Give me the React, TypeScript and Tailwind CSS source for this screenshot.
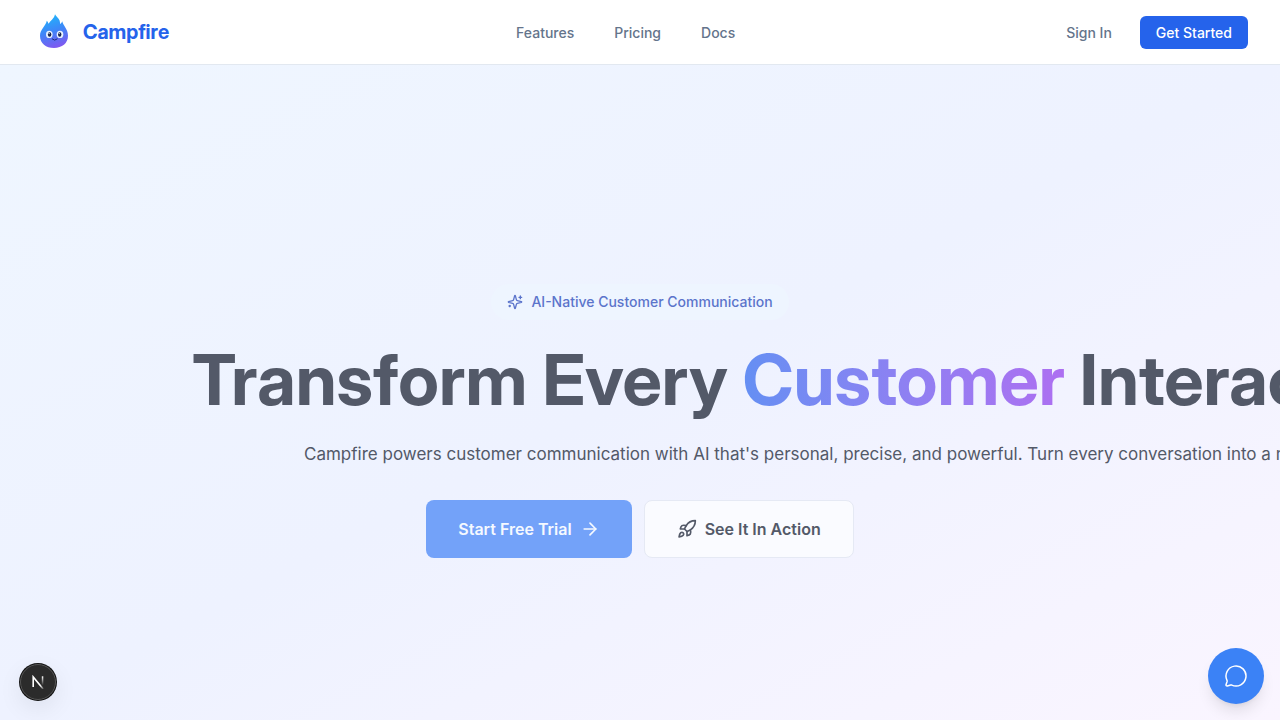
import React from "react";
import { ArrowRight, MessageCircle, Rocket } from "lucide-react";

function FlameLogo() {
  return (
    <svg viewBox="0 0 28 36" className="h-9 w-7" aria-hidden="true">
      <defs>
        <linearGradient id="flame" x1="0.35" y1="0" x2="0.6" y2="1">
          <stop offset="0" stopColor="#1fb6fb" />
          <stop offset="0.5" stopColor="#3f85f8" />
          <stop offset="1" stopColor="#8257f0" />
        </linearGradient>
      </defs>
      <path
        d="M15 0.2C16 2 18.6 4 19.6 6.6C20 7.8 20 8.8 20.1 10C21.2 9.4 21.9 8.4 22.3 7.2C22.8 11.4 28 14.6 28 21.8C28 29.4 22 34 14 34S0 29.6 0 21.8C0 15.4 5.6 12.4 6.8 6.8C7.6 7.6 8.2 8.6 8.5 9.8C10.4 6.4 14.2 4.6 15 0.2Z"
        fill="url(#flame)"
      />
      <ellipse cx="9.3" cy="20.4" rx="3.3" ry="3.7" fill="#e9f3ff" />
      <ellipse cx="20" cy="20.4" rx="3.3" ry="3.7" fill="#e9f3ff" />
      <ellipse cx="9.6" cy="20.5" rx="1.7" ry="2.3" fill="#14234f" />
      <ellipse cx="19.7" cy="20.5" rx="1.7" ry="2.3" fill="#14234f" />
      <circle cx="9.1" cy="19.6" r="0.6" fill="#fff" />
      <circle cx="19.2" cy="19.6" r="0.6" fill="#fff" />
      <path d="M12.2 25Q14.7 27.6 17.2 25" fill="none" stroke="#1d2c78" strokeWidth="1" strokeLinecap="round" />
    </svg>
  );
}

function SparkleIcon() {
  return (
    <svg
      viewBox="0 0 24 24"
      className="size-4"
      fill="none"
      stroke="currentColor"
      strokeWidth="2"
      strokeLinecap="round"
      strokeLinejoin="round"
      aria-hidden="true"
    >
      <path d="M9.937 15.5A2 2 0 0 0 8.5 14.063l-6.135-1.582a.5.5 0 0 1 0-.962L8.5 9.936A2 2 0 0 0 9.937 8.5l1.582-6.135a.5.5 0 0 1 .963 0L14.063 8.5A2 2 0 0 0 15.5 9.937l6.135 1.581a.5.5 0 0 1 0 .964L15.5 14.063a2 2 0 0 0-1.437 1.437l-1.582 6.135a.5.5 0 0 1-.963 0z" />
      <path d="M20 3v4" />
      <path d="M22 5h-4" />
      <path d="M4 17v2" />
      <path d="M5 18H3" />
    </svg>
  );
}

function Header() {
  return (
    <header className="border-b border-slate-200 bg-white">
      <div className="flex h-16 items-center justify-between px-8">
        <a
          href="#home"
          className="flex items-center gap-[15px] pr-8 pl-2 font-['Inter_Display',Inter,sans-serif] text-xl font-bold text-[#2563eb]"
        >
          <FlameLogo />
          Campfire
        </a>
        <nav className="flex items-center gap-10 pt-px text-sm font-medium text-[#64748b]">
          <a href="#features">Features</a>
          <a href="#pricing">Pricing</a>
          <a href="#docs">Docs</a>
        </nav>
        <div className="flex items-center gap-3 pt-px text-sm font-medium">
          <a href="#signin" className="px-4 py-2 text-[#64748b]">
            Sign In
          </a>
          <a href="#signup" className="rounded-md bg-[#2563eb] px-4 py-1.5 leading-[21px] text-white">
            Get Started
          </a>
        </div>
      </div>
    </header>
  );
}

function Hero() {
  return (
    <main className="flex flex-1 flex-col justify-center overflow-hidden bg-[linear-gradient(to_bottom_right,#eff6ff,#eef2ff,#faf5ff)] pt-14">
      <div className="mx-auto flex w-full max-w-4xl flex-col">
        <div className="flex items-center gap-2 self-center rounded-full bg-[#eef5ff] px-4 py-2 text-sm font-medium text-[#5b74cb]">
          <SparkleIcon />
          AI-Native Customer Communication
        </div>
        <h1 className="mt-6 font-['Inter_Display',Inter,sans-serif] text-[70px] leading-[72px] font-bold whitespace-nowrap text-[#535968]">
          Transform Every{" "}
          <span className="bg-linear-to-r from-[#648ff3] to-[#ad6ff1] bg-clip-text text-transparent">Customer</span>{" "}
          Interaction
        </h1>
        <div className="mx-auto mt-6 w-full max-w-2xl">
          <p className="text-[17px] leading-7 whitespace-nowrap text-[#535968]">
            Campfire powers customer communication with AI that's personal, precise, and powerful. Turn every
            conversation into a meaningful connection.
          </p>
        </div>
        <div className="mt-8 flex items-center justify-center gap-3 font-semibold">
          <button type="button" className="flex h-[58px] items-center gap-2 rounded-lg bg-[#73a2f9] px-8 text-[#f5f9ff]">
            Start Free Trial
            <ArrowRight className="size-5" />
          </button>
          <button
            type="button"
            className="flex h-[58px] items-center gap-2 rounded-lg border border-[#e5e9f4] bg-[#fafbff] px-8 text-[#535968]"
          >
            <Rocket className="size-5" />
            See It In Action
          </button>
        </div>
      </div>
    </main>
  );
}

export default function App() {
  return (
    <div className="flex min-h-screen flex-col font-[Inter,sans-serif]">
      <Header />
      <Hero />
      <button
        type="button"
        aria-label="Open developer tools"
        className="fixed bottom-5 left-5 flex size-9 items-center justify-center rounded-full border border-[#555] bg-[#2b2b2b] shadow-[0_0_0_1px_#111,0_8px_24px_rgba(0,0,0,0.08)]"
      >
        <svg viewBox="0 0 14 14" className="size-3.5" fill="none" aria-hidden="true">
          <defs>
            <linearGradient id="stem" x1="0" y1="0" x2="0" y2="1">
              <stop offset="0" stopColor="#fff" />
              <stop offset="1" stopColor="#fff" stopOpacity="0" />
            </linearGradient>
            <linearGradient id="slope" x1="0" y1="0" x2="1" y2="1">
              <stop offset="0.7" stopColor="#fff" />
              <stop offset="1" stopColor="#fff" stopOpacity="0.2" />
            </linearGradient>
          </defs>
          <path d="M2.2 12V1.9L12.2 14" stroke="url(#slope)" strokeWidth="1.6" />
          <rect x="10.8" y="1.3" width="1.5" height="9" fill="url(#stem)" />
        </svg>
      </button>
      <button
        type="button"
        aria-label="Open chat"
        className="fixed right-4 bottom-4 flex size-14 items-center justify-center rounded-full bg-[#3b82f6] text-white shadow-lg"
      >
        <MessageCircle className="size-6" strokeWidth={1.5} />
      </button>
    </div>
  );
}
